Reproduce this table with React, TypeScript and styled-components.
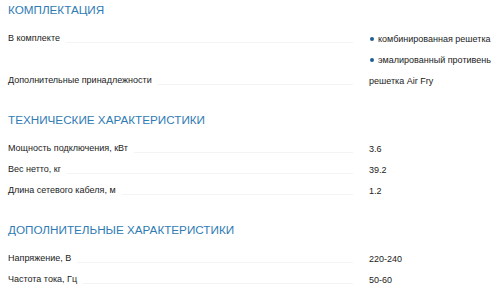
import styled, { createGlobalStyle } from 'styled-components'

interface SpecRow {
  label: string
  values: string[]
  bullets?: boolean
}

interface SpecSection {
  title: string
  rows: SpecRow[]
}

const sections: SpecSection[] = [
  {
    title: 'КОМПЛЕКТАЦИЯ',
    rows: [
      {
        label: 'В комплекте',
        values: ['комбинированная решетка', 'эмалированный противень'],
        bullets: true,
      },
      { label: 'Дополнительные принадлежности', values: ['решетка Air Fry'] },
    ],
  },
  {
    title: 'ТЕХНИЧЕСКИЕ ХАРАКТЕРИСТИКИ',
    rows: [
      { label: 'Мощность подключения, кВт', values: ['3.6'] },
      { label: 'Вес нетто, кг', values: ['39.2'] },
      { label: 'Длина сетевого кабеля, м', values: ['1.2'] },
    ],
  },
  {
    title: 'ДОПОЛНИТЕЛЬНЫЕ ХАРАКТЕРИСТИКИ',
    rows: [
      { label: 'Напряжение, В', values: ['220-240'] },
      { label: 'Частота тока, Гц', values: ['50-60'] },
    ],
  },
]

export default function App() {
  return (
    <>
      <GlobalStyle />
      <Page>
        {sections.map((section) => (
          <Section key={section.title}>
            <SectionTitle>{section.title}</SectionTitle>
            {section.rows.map((row) => (
              <Row key={row.label}>
                <LabelCell>
                  <Label>{row.label}</Label>
                  <Filler />
                </LabelCell>
                <ValueList>
                  {row.values.map((value) => (
                    <ValueItem key={value} $bullet={!!row.bullets}>
                      {value}
                    </ValueItem>
                  ))}
                </ValueList>
              </Row>
            ))}
          </Section>
        ))}
      </Page>
    </>
  )
}

const GlobalStyle = createGlobalStyle`
  html, body {
    margin: 0;
    padding: 0;
    background: #fff;
  }
  body {
    font-family: "Liberation Sans", Arial, Helvetica, sans-serif;
    color: #222;
  }
`

const Page = styled.div`
  padding: 2px 0 0 8px;
  width: 492px;
  box-sizing: border-box;
`

const Section = styled.section`
  & + & {
    margin-top: 21px;
  }
`

const SectionTitle = styled.h2`
  margin: 0 0 10px;
  font-size: 11.7px;
  line-height: 16px;
  font-weight: normal;
  color: #2f7bb3;
`

const Row = styled.div`
  display: grid;
  grid-template-columns: 345px 1fr;
  column-gap: 16px;
  align-items: start;
`

const LabelCell = styled.div`
  display: flex;
  align-items: baseline;
  height: 21px;
  line-height: 21px;
  font-size: 9px;
`

const Label = styled.span`
  white-space: nowrap;
  color: #222;
`

const Filler = styled.span`
  flex: 1;
  height: 1px;
  margin-left: 6px;
  background: #f4f4f4;
  transform: translateY(2px);
`

const ValueList = styled.ul`
  list-style: none;
  margin: 0;
  padding: 0;
`

const ValueItem = styled.li<{ $bullet: boolean }>`
  display: flex;
  align-items: center;
  height: 21px;
  font-size: 9px;
  color: #222;
  white-space: nowrap;

  &::before {
    content: '';
    display: ${({ $bullet }) => ($bullet ? 'block' : 'none')};
    width: 4px;
    height: 4px;
    border-radius: 50%;
    background: #1d5e98;
    margin: 0 4px 0 1px;
  }
`
